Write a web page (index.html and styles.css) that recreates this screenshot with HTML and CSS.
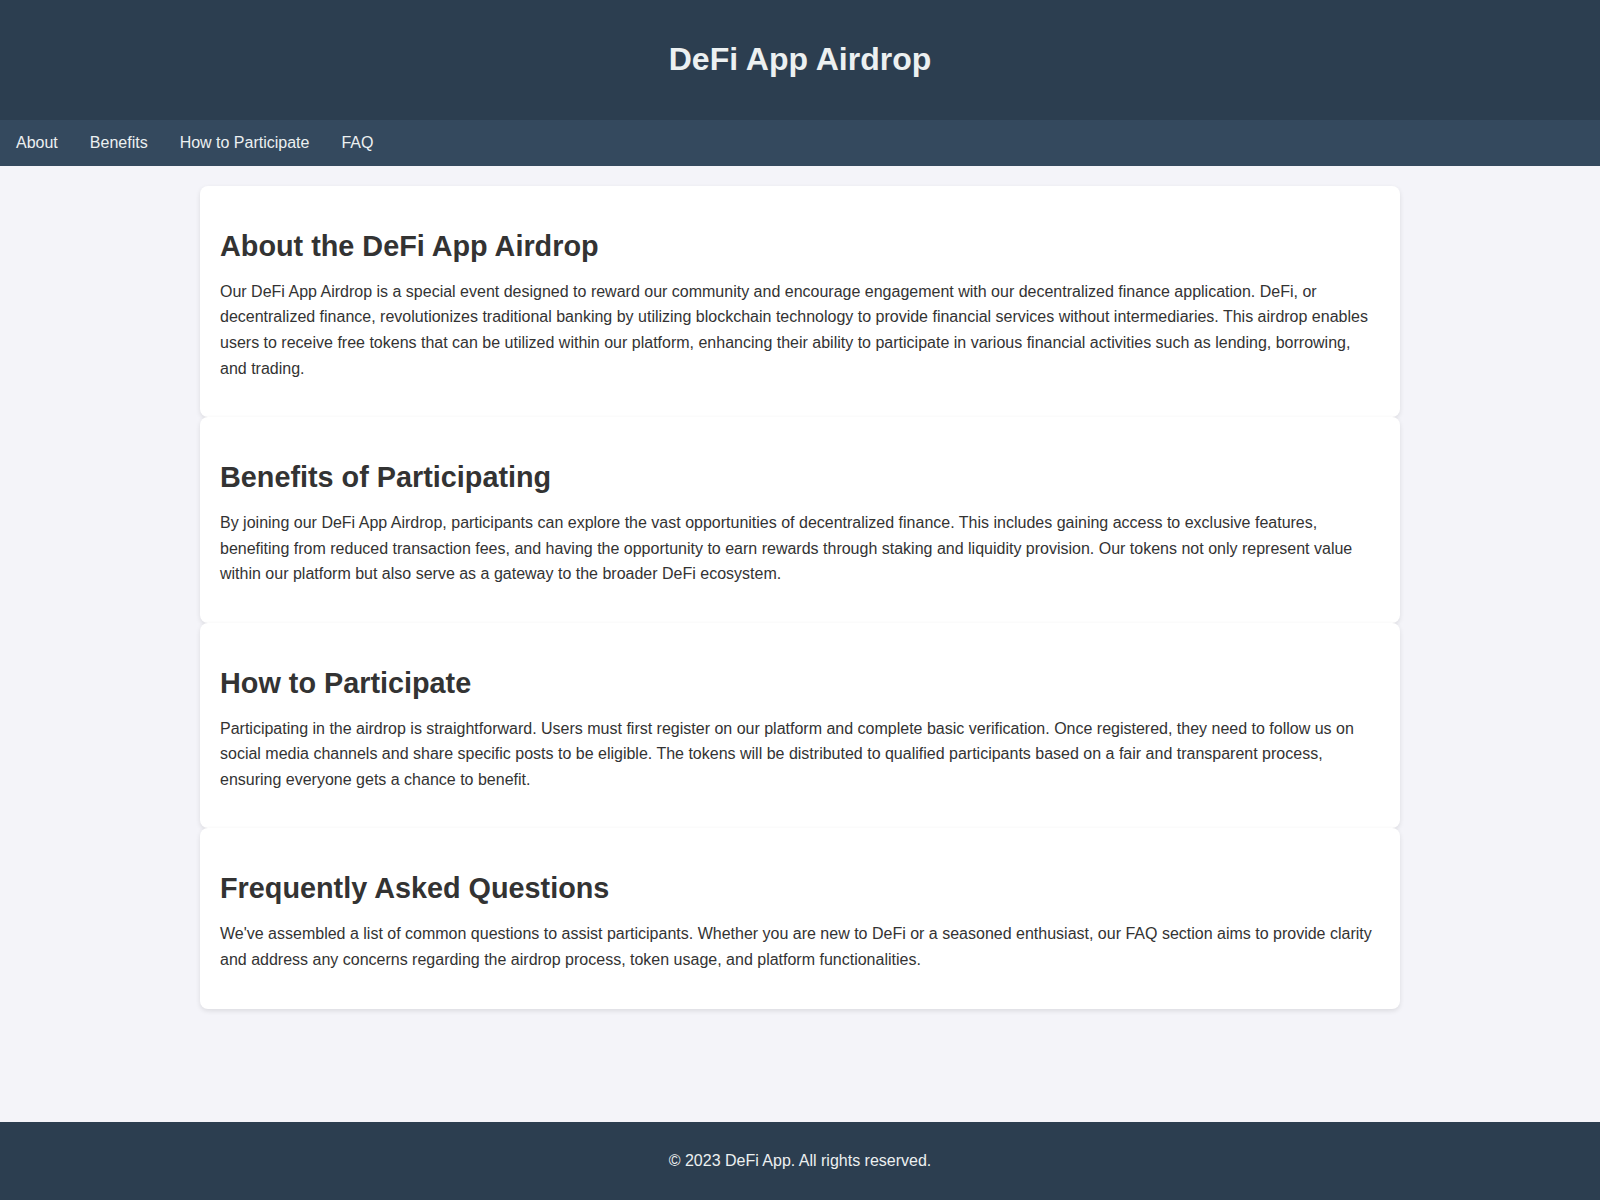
FILE: index.html
```html
<!DOCTYPE html>
<html lang="en">
<head>
  <meta charset="UTF-8">
  <meta name="viewport" content="width=device-width, initial-scale=1.0">
  <title>DeFi App Airdrop</title>
  <link rel="stylesheet" href="styles.css">
</head>
<body>
  <header>
    <h1>DeFi App Airdrop</h1>
  </header>

  <nav>
    <a href="#about">About</a>
    <a href="#benefits">Benefits</a>
    <a href="#participate">How to Participate</a>
    <a href="#faq">FAQ</a>
  </nav>

  <main>
    <section id="about">
      <h2>About the DeFi App Airdrop</h2>
      <p>Our DeFi App Airdrop is a special event designed to reward our community and encourage engagement with our decentralized finance application. DeFi, or decentralized finance, revolutionizes traditional banking by utilizing blockchain technology to provide financial services without intermediaries. This airdrop enables users to receive free tokens that can be utilized within our platform, enhancing their ability to participate in various financial activities such as lending, borrowing, and trading.</p>
    </section>

    <section id="benefits">
      <h2>Benefits of Participating</h2>
      <p>By joining our DeFi App Airdrop, participants can explore the vast opportunities of decentralized finance. This includes gaining access to exclusive features, benefiting from reduced transaction fees, and having the opportunity to earn rewards through staking and liquidity provision. Our tokens not only represent value within our platform but also serve as a gateway to the broader DeFi ecosystem.</p>
    </section>

    <section id="participate">
      <h2>How to Participate</h2>
      <p>Participating in the airdrop is straightforward. Users must first register on our platform and complete basic verification. Once registered, they need to follow us on social media channels and share specific posts to be eligible. The tokens will be distributed to qualified participants based on a fair and transparent process, ensuring everyone gets a chance to benefit.</p>
    </section>

    <section id="faq">
      <h2>Frequently Asked Questions</h2>
      <p>We've assembled a list of common questions to assist participants. Whether you are new to DeFi or a seasoned enthusiast, our FAQ section aims to provide clarity and address any concerns regarding the airdrop process, token usage, and platform functionalities.</p>
    </section>
  </main>

  <footer>
    <p>&copy; 2023 DeFi App. All rights reserved.</p>
  </footer>
</body>
</html>
```

FILE: styles.css
```css
body {
  font-family: Arial, "Liberation Sans", sans-serif;
  margin: 0;
  padding: 0;
  background-color: #f4f4f9;
  color: #333;
  min-height: 100vh;
  display: flex;
  flex-direction: column;
}

header {
  background-color: #2c3e50;
  color: #ecf0f1;
  padding: 20px;
  text-align: center;
}

header h1 {
  font-size: 2em;
  margin: 0.67em 0;
}

nav {
  background-color: #34495e;
  display: flex;
}

nav a {
  color: #ecf0f1;
  text-decoration: none;
  padding: 14px 16px;
  font-size: 16px;
}

nav a:hover {
  background-color: #2c3e50;
}

main {
  flex: 1;
  width: 100%;
  max-width: 1200px;
  margin: 20px auto;
}

section {
  background-color: #fff;
  padding: 20px;
  border-radius: 8px;
  box-shadow: 0 2px 5px rgba(0, 0, 0, 0.1);
}

section h2 {
  font-size: 1.8em;
  margin: 0.83em 0 16px;
}

section p {
  line-height: 1.6;
  margin: 0 0 16px;
}

footer {
  background-color: #2c3e50;
  color: #ecf0f1;
  text-align: center;
  padding: 10px;
}

footer p {
  line-height: 1.6;
}
```
